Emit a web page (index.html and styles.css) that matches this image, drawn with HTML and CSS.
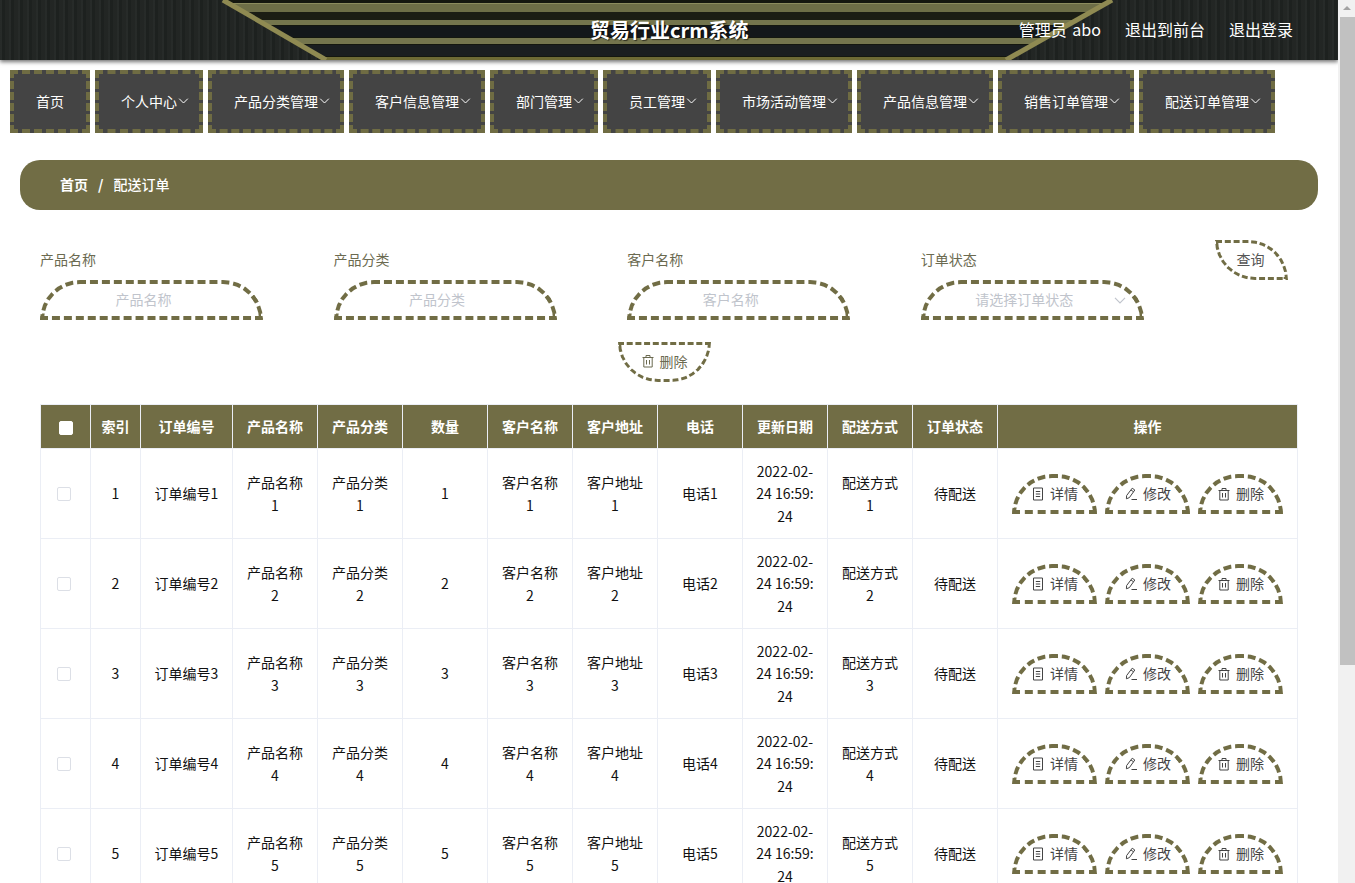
FILE: index.html
```html
<!DOCTYPE html>
<html lang="zh">
<head>
<meta charset="utf-8">
<title>贸易行业crm系统</title>
<link rel="stylesheet" href="styles.css">
</head>
<body>
<svg class="defs" width="0" height="0" aria-hidden="true">
  <symbol id="i-doc" viewBox="0 0 14 14"><path d="M2.5 1h9v12h-9z M4.8 4.5h4.4 M4.8 7h4.4 M4.8 9.5h4.4" fill="none" stroke="currentColor" stroke-width="1"/></symbol>
  <symbol id="i-edit" viewBox="0 0 14 14"><path d="M8.2 1.2l2.6 1.8-5.4 7.6-3 1.2.2-3.2z M7 3l2.6 1.8 M7.5 12.5h5.5" fill="none" stroke="currentColor" stroke-width="1"/></symbol>
  <symbol id="i-del" viewBox="0 0 14 14"><path d="M1.5 3.5h11 M5 3.5V1.5h4v2 M2.8 3.5v9.5h8.4V3.5 M5.5 6v4.5 M8.5 6v4.5" fill="none" stroke="currentColor" stroke-width="1"/></symbol>
</svg>

<div class="page">
<header class="topbar">
  <svg class="topbar-art" viewBox="0 0 1338 60" preserveAspectRatio="none" aria-hidden="true">
    <defs><clipPath id="trap"><polygon points="223,0 1112,0 1006,60 326,60"/></clipPath></defs>
    <g clip-path="url(#trap)">
      <rect x="200" y="0" width="940" height="60" fill="#14170f"/>
      <rect x="200" y="3" width="940" height="9" fill="#6d6e47"/>
      <rect x="200" y="3" width="940" height="1" fill="#8b8c5e"/>
      <rect x="200" y="12" width="940" height="8" fill="#1b1d14"/>
      <rect x="200" y="20" width="940" height="5" fill="#74754d"/>
      <rect x="200" y="26" width="940" height="11" fill="#13171a"/>
      <rect x="200" y="38" width="940" height="6" fill="#74754d"/>
      <rect x="200" y="45" width="940" height="11" fill="#1a1e20"/>
      <rect x="200" y="57" width="940" height="3" fill="#6d6a35"/>
    </g>
    <path d="M223 0 L326 60" stroke="#8f8a52" stroke-width="5" fill="none"/>
    <path d="M1112 0 L1006 60" stroke="#8f8a52" stroke-width="5" fill="none"/>
  </svg>
  <h1 class="brand">贸易行业crm系统</h1>
  <div class="user-links">
    <span class="user-name">管理员 abo</span>
    <a>退出到前台</a>
    <a>退出登录</a>
  </div>
</header>

<nav class="menu">
  <a class="menu-item">首页</a>
  <a class="menu-item">个人中心<svg class="chev" viewBox="0 0 10 6"><path d="M.7.7 5 5 9.3.7"/></svg></a>
  <a class="menu-item">产品分类管理<svg class="chev" viewBox="0 0 10 6"><path d="M.7.7 5 5 9.3.7"/></svg></a>
  <a class="menu-item">客户信息管理<svg class="chev" viewBox="0 0 10 6"><path d="M.7.7 5 5 9.3.7"/></svg></a>
  <a class="menu-item">部门管理<svg class="chev" viewBox="0 0 10 6"><path d="M.7.7 5 5 9.3.7"/></svg></a>
  <a class="menu-item">员工管理<svg class="chev" viewBox="0 0 10 6"><path d="M.7.7 5 5 9.3.7"/></svg></a>
  <a class="menu-item">市场活动管理<svg class="chev" viewBox="0 0 10 6"><path d="M.7.7 5 5 9.3.7"/></svg></a>
  <a class="menu-item">产品信息管理<svg class="chev" viewBox="0 0 10 6"><path d="M.7.7 5 5 9.3.7"/></svg></a>
  <a class="menu-item">销售订单管理<svg class="chev" viewBox="0 0 10 6"><path d="M.7.7 5 5 9.3.7"/></svg></a>
  <a class="menu-item">配送订单管理<svg class="chev" viewBox="0 0 10 6"><path d="M.7.7 5 5 9.3.7"/></svg></a>
</nav>

<main class="content">
  <div class="crumb"><b>首页</b><i>/</i><span>配送订单</span></div>

  <form class="filters">
    <label class="field"><span class="field-label">产品名称</span><span class="field-box">产品名称</span></label>
    <label class="field"><span class="field-label">产品分类</span><span class="field-box">产品分类</span></label>
    <label class="field"><span class="field-label">客户名称</span><span class="field-box">客户名称</span></label>
    <label class="field"><span class="field-label">订单状态</span><span class="field-box">请选择订单状态<svg class="chev chev-select" viewBox="0 0 10 6"><path d="M.7.7 5 5 9.3.7"/></svg></span></label>
    <button type="button" class="btn-query">查询</button>
  </form>

  <div class="bulk">
    <button type="button" class="btn-bulk"><svg class="ico"><use href="#i-del"/></svg>删除</button>
  </div>

  <table class="grid">
    <colgroup>
      <col class="c-check"><col class="c-index"><col class="c-no">
      <col class="c-std"><col class="c-std"><col class="c-std"><col class="c-std"><col class="c-std"><col class="c-std"><col class="c-std"><col class="c-std"><col class="c-std">
      <col class="c-ops">
    </colgroup>
    <thead>
      <tr>
        <th><span class="check check-head"></span></th><th>索引</th><th>订单编号</th><th>产品名称</th><th>产品分类</th><th>数量</th><th>客户名称</th><th>客户地址</th><th>电话</th><th>更新日期</th><th>配送方式</th><th>订单状态</th><th>操作</th>
      </tr>
    </thead>
    <tbody>
      <tr>
        <td><span class="check"></span></td><td>1</td><td>订单编号1</td><td>产品名称1</td><td>产品分类1</td><td>1</td><td>客户名称1</td><td>客户地址1</td><td>电话1</td><td>2022-02-24 16:59:24</td><td>配送方式1</td><td>待配送</td>
        <td><div class="ops"><button type="button" class="btn-op"><svg class="ico"><use href="#i-doc"/></svg>详情</button><button type="button" class="btn-op"><svg class="ico"><use href="#i-edit"/></svg>修改</button><button type="button" class="btn-op"><svg class="ico"><use href="#i-del"/></svg>删除</button></div></td>
      </tr>
      <tr>
        <td><span class="check"></span></td><td>2</td><td>订单编号2</td><td>产品名称2</td><td>产品分类2</td><td>2</td><td>客户名称2</td><td>客户地址2</td><td>电话2</td><td>2022-02-24 16:59:24</td><td>配送方式2</td><td>待配送</td>
        <td><div class="ops"><button type="button" class="btn-op"><svg class="ico"><use href="#i-doc"/></svg>详情</button><button type="button" class="btn-op"><svg class="ico"><use href="#i-edit"/></svg>修改</button><button type="button" class="btn-op"><svg class="ico"><use href="#i-del"/></svg>删除</button></div></td>
      </tr>
      <tr>
        <td><span class="check"></span></td><td>3</td><td>订单编号3</td><td>产品名称3</td><td>产品分类3</td><td>3</td><td>客户名称3</td><td>客户地址3</td><td>电话3</td><td>2022-02-24 16:59:24</td><td>配送方式3</td><td>待配送</td>
        <td><div class="ops"><button type="button" class="btn-op"><svg class="ico"><use href="#i-doc"/></svg>详情</button><button type="button" class="btn-op"><svg class="ico"><use href="#i-edit"/></svg>修改</button><button type="button" class="btn-op"><svg class="ico"><use href="#i-del"/></svg>删除</button></div></td>
      </tr>
      <tr>
        <td><span class="check"></span></td><td>4</td><td>订单编号4</td><td>产品名称4</td><td>产品分类4</td><td>4</td><td>客户名称4</td><td>客户地址4</td><td>电话4</td><td>2022-02-24 16:59:24</td><td>配送方式4</td><td>待配送</td>
        <td><div class="ops"><button type="button" class="btn-op"><svg class="ico"><use href="#i-doc"/></svg>详情</button><button type="button" class="btn-op"><svg class="ico"><use href="#i-edit"/></svg>修改</button><button type="button" class="btn-op"><svg class="ico"><use href="#i-del"/></svg>删除</button></div></td>
      </tr>
      <tr>
        <td><span class="check"></span></td><td>5</td><td>订单编号5</td><td>产品名称5</td><td>产品分类5</td><td>5</td><td>客户名称5</td><td>客户地址5</td><td>电话5</td><td>2022-02-24 16:59:24</td><td>配送方式5</td><td>待配送</td>
        <td><div class="ops"><button type="button" class="btn-op"><svg class="ico"><use href="#i-doc"/></svg>详情</button><button type="button" class="btn-op"><svg class="ico"><use href="#i-edit"/></svg>修改</button><button type="button" class="btn-op"><svg class="ico"><use href="#i-del"/></svg>删除</button></div></td>
      </tr>
      <tr>
        <td><span class="check"></span></td><td>6</td><td>订单编号6</td><td>产品名称6</td><td>产品分类6</td><td>6</td><td>客户名称6</td><td>客户地址6</td><td>电话6</td><td>2022-02-24 16:59:24</td><td>配送方式6</td><td>待配送</td>
        <td><div class="ops"><button type="button" class="btn-op"><svg class="ico"><use href="#i-doc"/></svg>详情</button><button type="button" class="btn-op"><svg class="ico"><use href="#i-edit"/></svg>修改</button><button type="button" class="btn-op"><svg class="ico"><use href="#i-del"/></svg>删除</button></div></td>
      </tr>
    </tbody>
  </table>
</main>
</div>

<div class="scrollbar" aria-hidden="true">
  <span class="scroll-arrow"></span>
  <span class="scroll-thumb"></span>
</div>
</body>
</html>
```
FILE: styles.css
```css
* { box-sizing: border-box; }
body {
  margin: 0;
  font-family: "Noto Sans CJK SC", "Liberation Sans", sans-serif;
  font-size: 14px;
  color: #222;
  background: #fff;
}
.defs { display: block; height: 0; }
.page { width: 1338px; }

.scrollbar {
  position: fixed;
  top: 0;
  right: 0;
  bottom: 0;
  width: 17px;
  padding-left: 2px;
  background: #f1f1f1;
}
.scroll-arrow {
  display: block;
  width: 0;
  height: 0;
  margin: 6px 0 7px 3px;
  border-left: 4px solid transparent;
  border-right: 4px solid transparent;
  border-bottom: 4px solid #a3a3a3;
}
.scroll-thumb {
  display: block;
  height: 648px;
  background: #c1c1c1;
}

.topbar {
  position: relative;
  height: 60px;
  display: flex;
  align-items: center;
  justify-content: flex-end;
  padding-right: 45px;
  background-color: #1f2321;
  background-image: repeating-linear-gradient(90deg, rgba(255,255,255,.035) 0 2px, rgba(0,0,0,.06) 2px 5px, rgba(255,255,255,.015) 5px 9px);
  box-shadow: 0 2px 4px rgba(0,0,0,.55);
  color: #fff;
}
.topbar-art { position: absolute; inset: 0; width: 100%; height: 100%; }
.brand {
  position: absolute;
  left: 590px;
  top: 16px;
  margin: 0;
  font-size: 20px;
  line-height: 28px;
  font-weight: 700;
  text-shadow: 1px 1px 1px rgba(0,0,0,.6);
}
.user-links { position: relative; display: flex; gap: 24px; font-size: 16px; line-height: 24px; margin-top: -2px; }
.user-name { word-spacing: 2px; }

.menu { display: flex; gap: 5px; padding: 10px 0 0 10px; }
.menu-item {
  display: flex;
  align-items: center;
  justify-content: center;
  height: 63px;
  padding: 0 10px 2px 22px;
  min-width: 80px;
  border: 4px dashed #6f6c43;
  background: #444;
  color: #fff;
  font-size: 14px;
  white-space: nowrap;
}
.menu-item:first-child { padding: 0 22px 2px; }
.chev { width: 11px; height: 6px; margin-left: 1px; fill: none; stroke: #fff; stroke-width: 1; }

.content { padding: 27px 20px 260px 20px; }
.crumb {
  display: flex;
  align-items: center;
  width: 1298px;
  height: 50px;
  padding: 0 0 2px 40px;
  border-radius: 20px;
  background: #716d45;
  color: #fff;
  font-size: 14px;
  font-weight: 500;
}
.crumb b { font-weight: 700; }
.crumb i { font-style: normal; font-weight: 700; margin: 0 10px; }

.filters {
  position: relative;
  display: flex;
  margin-top: 30px;
  padding-left: 20px;
  height: 80px;
}
.field { display: flex; flex-direction: column; width: 293.6px; }
.field-label { height: 40px; padding-top: 8px; line-height: 22px; font-size: 14px; color: #6b6a50; }
.field-box {
  display: flex;
  align-items: center;
  justify-content: center;
  position: relative;
  width: 223px;
  height: 40px;
  padding: 0 16px 2px 0;
  border: 4px dashed #716d45;
  border-radius: 40px 40px 0 0;
  font-size: 14px;
  color: #c0c4cc;
}
.chev-select {
  position: absolute;
  right: 14px;
  top: 13px;
  width: 12px;
  height: 7px;
  stroke: #c0c4cc;
}
.btn-query {
  position: absolute;
  left: 1195px;
  top: 0;
  width: 73px;
  height: 40px;
  padding: 0 2px 2px 0;
  border: 3px dashed #716d45;
  border-radius: 0 40px 0 40px;
  background: #fff;
  font: inherit;
  font-size: 14px;
  color: #555;
}

.bulk { display: flex; justify-content: center; margin-top: 22px; padding-right: 10px; }
.btn-bulk {
  display: flex;
  align-items: center;
  justify-content: center;
  width: 93px;
  height: 40px;
  padding: 0 0 2px;
  border: 3px dashed #716d45;
  border-radius: 0 0 40px 40px;
  background: #fff;
  font: inherit;
  font-size: 14px;
  color: #6b6a50;
}
.ico { width: 14px; height: 14px; margin-right: 5px; flex: none; }

.grid {
  table-layout: fixed;
  border-collapse: collapse;
  width: 1257px;
  margin: 22px 0 0 20px;
  text-align: center;
}
.c-check { width: 50px; }
.c-index { width: 50px; }
.c-no { width: 92px; }
.c-std { width: 85px; }
.c-ops { width: 300px; }
.grid th {
  height: 44px;
  padding: 0 0 2px;
  background: #716d45;
  color: #fff;
  font-size: 14px;
  font-weight: 700;
  border: 1px solid #ebeef5;
  border-bottom: 0;
}
.grid td {
  height: 90px;
  padding: 0 12px;
  border: 1px solid #ebeef5;
  font-size: 14px;
  line-height: 22.4px;
  color: #111;
  word-break: break-all;
}
.grid td:last-child { padding: 0; }
.check {
  display: inline-block;
  vertical-align: middle;
  width: 14px;
  height: 14px;
  margin: 0 3px 3px 0;
  border: 1px solid #dcdfe6;
  border-radius: 2px;
  background: #fff;
}
.check-head { border-color: #fff; margin: 0; }
.ops { display: flex; gap: 8px; padding-left: 14px; }
.btn-op {
  display: flex;
  align-items: center;
  justify-content: center;
  width: 85px;
  height: 40px;
  padding: 0;
  border: 4px dashed #716d45;
  border-radius: 40px 40px 0 0;
  background: #fff;
  font: inherit;
  font-size: 14px;
  color: #444;
}
```
